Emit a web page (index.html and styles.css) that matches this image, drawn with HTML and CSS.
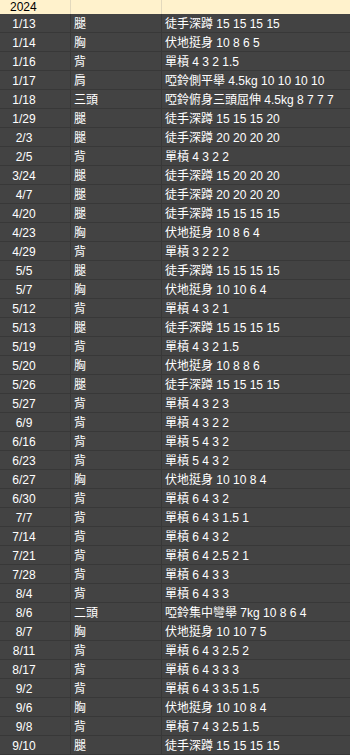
FILE: index.html
```html
<!DOCTYPE html>
<html lang="zh-Hant">
<head>
<meta charset="utf-8">
<title>2024</title>
<link rel="stylesheet" href="styles.css">
</head>
<body>
<div class="sheet">
  <div class="row head"><div class="c date-h">2024</div><div class="c part"></div><div class="c ex"></div></div>
  <div class="row"><div class="c date">1/13</div><div class="c part">腿</div><div class="c ex">徒手深蹲 15 15 15 15</div></div>
  <div class="row"><div class="c date">1/14</div><div class="c part">胸</div><div class="c ex">伏地挺身 10 8 6 5</div></div>
  <div class="row"><div class="c date">1/16</div><div class="c part">背</div><div class="c ex">單槓 4 3 2 1.5</div></div>
  <div class="row"><div class="c date">1/17</div><div class="c part">肩</div><div class="c ex">啞鈴側平舉 4.5kg 10 10 10 10</div></div>
  <div class="row"><div class="c date">1/18</div><div class="c part">三頭</div><div class="c ex">啞鈴俯身三頭屈伸 4.5kg 8 7 7 7</div></div>
  <div class="row"><div class="c date">1/29</div><div class="c part">腿</div><div class="c ex">徒手深蹲 15 15 15 20</div></div>
  <div class="row"><div class="c date">2/3</div><div class="c part">腿</div><div class="c ex">徒手深蹲 20 20 20 20</div></div>
  <div class="row"><div class="c date">2/5</div><div class="c part">背</div><div class="c ex">單槓 4 3 2 2</div></div>
  <div class="row"><div class="c date">3/24</div><div class="c part">腿</div><div class="c ex">徒手深蹲 15 20 20 20</div></div>
  <div class="row"><div class="c date">4/7</div><div class="c part">腿</div><div class="c ex">徒手深蹲 20 20 20 20</div></div>
  <div class="row"><div class="c date">4/20</div><div class="c part">腿</div><div class="c ex">徒手深蹲 15 15 15 15</div></div>
  <div class="row"><div class="c date">4/23</div><div class="c part">胸</div><div class="c ex">伏地挺身 10 8 6 4</div></div>
  <div class="row"><div class="c date">4/29</div><div class="c part">背</div><div class="c ex">單槓 3 2 2 2</div></div>
  <div class="row"><div class="c date">5/5</div><div class="c part">腿</div><div class="c ex">徒手深蹲 15 15 15 15</div></div>
  <div class="row"><div class="c date">5/7</div><div class="c part">胸</div><div class="c ex">伏地挺身 10 10 6 4</div></div>
  <div class="row"><div class="c date">5/12</div><div class="c part">背</div><div class="c ex">單槓 4 3 2 1</div></div>
  <div class="row"><div class="c date">5/13</div><div class="c part">腿</div><div class="c ex">徒手深蹲 15 15 15 15</div></div>
  <div class="row"><div class="c date">5/19</div><div class="c part">背</div><div class="c ex">單槓 4 3 2 1.5</div></div>
  <div class="row"><div class="c date">5/20</div><div class="c part">胸</div><div class="c ex">伏地挺身 10 8 8 6</div></div>
  <div class="row"><div class="c date">5/26</div><div class="c part">腿</div><div class="c ex">徒手深蹲 15 15 15 15</div></div>
  <div class="row"><div class="c date">5/27</div><div class="c part">背</div><div class="c ex">單槓 4 3 2 3</div></div>
  <div class="row"><div class="c date">6/9</div><div class="c part">背</div><div class="c ex">單槓 4 3 2 2</div></div>
  <div class="row"><div class="c date">6/16</div><div class="c part">背</div><div class="c ex">單槓 5 4 3 2</div></div>
  <div class="row"><div class="c date">6/23</div><div class="c part">背</div><div class="c ex">單槓 5 4 3 2</div></div>
  <div class="row"><div class="c date">6/27</div><div class="c part">胸</div><div class="c ex">伏地挺身 10 10 8 4</div></div>
  <div class="row"><div class="c date">6/30</div><div class="c part">背</div><div class="c ex">單槓 6 4 3 2</div></div>
  <div class="row"><div class="c date">7/7</div><div class="c part">背</div><div class="c ex">單槓 6 4 3 1.5 1</div></div>
  <div class="row"><div class="c date">7/14</div><div class="c part">背</div><div class="c ex">單槓 6 4 3 2</div></div>
  <div class="row"><div class="c date">7/21</div><div class="c part">背</div><div class="c ex">單槓 6 4 2.5 2 1</div></div>
  <div class="row"><div class="c date">7/28</div><div class="c part">背</div><div class="c ex">單槓 6 4 3 3</div></div>
  <div class="row"><div class="c date">8/4</div><div class="c part">背</div><div class="c ex">單槓 6 4 3 3</div></div>
  <div class="row"><div class="c date">8/6</div><div class="c part">二頭</div><div class="c ex">啞鈴集中彎舉 7kg 10 8 6 4</div></div>
  <div class="row"><div class="c date">8/7</div><div class="c part">胸</div><div class="c ex">伏地挺身 10 10 7 5</div></div>
  <div class="row"><div class="c date">8/11</div><div class="c part">背</div><div class="c ex">單槓 6 4 3 2.5 2</div></div>
  <div class="row"><div class="c date">8/17</div><div class="c part">背</div><div class="c ex">單槓 6 4 3 3 3</div></div>
  <div class="row"><div class="c date">9/2</div><div class="c part">背</div><div class="c ex">單槓 6 4 3 3.5 1.5</div></div>
  <div class="row"><div class="c date">9/6</div><div class="c part">胸</div><div class="c ex">伏地挺身 10 10 8 4</div></div>
  <div class="row"><div class="c date">9/8</div><div class="c part">背</div><div class="c ex">單槓 7 4 3 2.5 1.5</div></div>
  <div class="row"><div class="c date">9/10</div><div class="c part">腿</div><div class="c ex">徒手深蹲 15 15 15 15</div></div>
</div>
</body>
</html>
```

FILE: styles.css
```css
html, body {
  margin: 0;
  padding: 0;
  background: #434343;
}
.sheet {
  width: 350px;
  font-family: "Liberation Sans", Arial, "Noto Sans CJK TC", sans-serif;
  font-size: 12px;
  color: #ffffff;
}
.row {
  display: grid;
  grid-template-columns: 71px 91px 1fr;
  height: 19px;
}
.c {
  box-sizing: border-box;
  height: 19px;
  border-right: 1px solid #383838;
  border-bottom: 1px solid #383838;
  padding-top: 1px;
  line-height: 18px;
  white-space: nowrap;
  overflow: hidden;
}
.date {
  text-align: center;
  padding-right: 22px;
}
.part, .ex {
  padding-left: 3px;
}
.ex {
  border-right: none;
}
.head {
  height: 14px;
  background: #fff2cc;
  color: #000000;
}
.head .c {
  height: 14px;
  line-height: 14px;
  padding-top: 0;
  border-bottom: none;
  border-right-color: #e3d9bd;
}
.head .ex {
  border-right: none;
}
.date-h {
  padding-left: 10px;
}
```
